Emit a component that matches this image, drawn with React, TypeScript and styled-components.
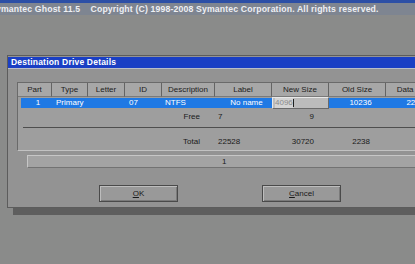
import styled, { createGlobalStyle } from 'styled-components';

const Global = createGlobalStyle`
  html, body {
    margin: 0;
    padding: 0;
    background: #8a8b8a;
    overflow: hidden;
  }
  #root {
    width: 415px;
    height: 264px;
  }
`;

const Screen = styled.div`
  width: 415px;
  height: 264px;
  overflow: hidden;
  background: #8a8b8a;
  font-family: 'Liberation Sans', Arial, sans-serif;
  display: flex;
  flex-direction: column;
`;

const TopBar = styled.div`
  height: 12px;
  border-top: 3px solid #2c4fa6;
  background: #7e8591;
  color: #eef0f4;
  font-size: 8.7px;
  font-weight: bold;
  line-height: 12px;
  white-space: nowrap;
  overflow: hidden;
  text-indent: -10px;
  letter-spacing: 0.15px;
`;

const Dialog = styled.div`
  margin: 40px 0 0 7px;
  width: 440px;
  height: 151px;
  flex: none;
  background: #939393;
  border: 1px solid #5c5c5c;
  box-shadow: 6px 7px 0 #5e5e5e;
  display: flex;
  flex-direction: column;
`;

const TitleBar = styled.div`
  height: 11px;
  margin-top: 1px;
  background: #1a3fc4;
  border-bottom: 1px solid #b9bdc8;
  color: #ffffff;
  font-size: 8.5px;
  font-weight: bold;
  line-height: 11px;
  padding-left: 3px;
  letter-spacing: 0.2px;
`;

const Body = styled.div`
  padding: 13px 0 0 9px;
  display: flex;
  flex-direction: column;
`;

const Panel = styled.div`
  height: 67px;
  background: #9e9e9e;
  border-left: 1px solid #6a6a6a;
  border-top: 1px solid #6a6a6a;
  border-bottom: 1px solid #c2c2c2;
  display: flex;
  flex-direction: column;
`;

const cols = '34px 36px 37px 37px 53px 57px 57px 57px 57px';

const HeaderRow = styled.div`
  display: grid;
  grid-template-columns: ${cols};
  height: 14px;
`;

const HeadCell = styled.div`
  background: #a7a7a7;
  border-right: 1px solid #646464;
  border-bottom: 1px solid #7a7a7a;
  color: #1c1c1c;
  font-size: 8px;
  line-height: 14px;
  text-align: center;
  white-space: nowrap;
  overflow: hidden;
`;

const DataRow = styled.div`
  display: grid;
  grid-template-columns: ${cols};
  height: 10px;
  margin: 1px 0 0 3px;
  background: #1f79e4;
`;

const Cell = styled.div<{ $align?: string; $pad?: number }>`
  color: #ffffff;
  font-size: 8px;
  line-height: 10px;
  white-space: nowrap;
  text-align: ${(p) => p.$align || 'center'};
  padding: 0 ${(p) => p.$pad ?? 0}px;
`;

const Input = styled.div`
  margin: -1px 3px -1px -3px;
  height: 10px;
  background: #bcbcbc;
  border: 1px solid #e8e8e8;
  border-right-color: #6a6a6a;
  border-bottom-color: #6a6a6a;
  color: #f4f4f4;
  font-size: 8px;
  line-height: 10px;
  padding-left: 2px;
  display: flex;
  align-items: center;
`;

const Selected = styled.span`
  background: #d4d4d4;
  color: #8a8a8a;
`;

const Caret = styled.span`
  display: inline-block;
  width: 1px;
  height: 8px;
  background: #202020;
`;

const SumRow = styled.div<{ $top: number }>`
  display: grid;
  grid-template-columns: ${cols};
  height: 10px;
  margin-top: ${(p) => p.$top}px;
`;

const SumCell = styled.div<{ $align?: string; $pad?: number }>`
  color: #1a1a1a;
  font-size: 8px;
  line-height: 10px;
  white-space: nowrap;
  text-align: ${(p) => p.$align || 'left'};
  padding: 0 ${(p) => p.$pad ?? 0}px;
`;

const Rule = styled.div`
  height: 1px;
  margin: 5px 0 0 5px;
  background: #4e4e4e;
`;

const Progress = styled.div`
  margin: 4px 0 0 10px;
  height: 11px;
  background: #a3a3a3;
  border-top: 1px solid #c6c6c6;
  border-left: 1px solid #c6c6c6;
  border-bottom: 1px solid #727272;
  color: #1a1a1a;
  font-size: 8px;
  line-height: 11px;
  padding-left: 194px;
`;

const Buttons = styled.div`
  display: flex;
  gap: 84px;
  margin: 17px 0 0 82px;
`;

const Button = styled.div`
  width: 77px;
  height: 15px;
  background: #999999;
  border: 1px solid #4a4a4a;
  box-shadow: inset 1px 1px 0 #bdbdbd, inset -1px -1px 0 #7a7a7a;
  color: #1a1a1a;
  font-size: 8px;
  line-height: 15px;
  text-align: center;
`;

const Key = styled.span`
  text-decoration: underline;
`;

export default function App() {
  const headers = ['Part', 'Type', 'Letter', 'ID', 'Description', 'Label', 'New Size', 'Old Size', 'Data Size'];
  return (
    <Screen>
      <Global />
      <TopBar>
        Symantec Ghost 11.5&nbsp;&nbsp;&nbsp; Copyright (C) 1998-2008 Symantec Corporation. All rights reserved.
      </TopBar>
      <Dialog>
        <TitleBar>Destination Drive Details</TitleBar>
        <Body>
          <Panel>
            <HeaderRow>
              {headers.map((h) => (
                <HeadCell key={h}>{h}</HeadCell>
              ))}
            </HeaderRow>
            <DataRow>
              <Cell>1</Cell>
              <Cell $align="left" $pad={1}>Primary</Cell>
              <Cell />
              <Cell $align="left" $pad={1}>07</Cell>
              <Cell $align="left" $pad={0}>NTFS</Cell>
              <Cell>No name</Cell>
              <Input>
                <Selected>4096</Selected>
                <Caret />
              </Input>
              <Cell>10236</Cell>
              <Cell>22528</Cell>
            </DataRow>
            <SumRow $top={4}>
              <SumCell />
              <SumCell />
              <SumCell />
              <SumCell />
              <SumCell $align="right" $pad={15}>Free</SumCell>
              <SumCell $pad={3}>7</SumCell>
              <SumCell $align="right" $pad={15}>9</SumCell>
              <SumCell />
              <SumCell />
            </SumRow>
            <Rule />
            <SumRow $top={9}>
              <SumCell />
              <SumCell />
              <SumCell />
              <SumCell />
              <SumCell $align="right" $pad={15}>Total</SumCell>
              <SumCell $pad={3}>22528</SumCell>
              <SumCell $align="right" $pad={15}>30720</SumCell>
              <SumCell $align="right" $pad={16}>2238</SumCell>
              <SumCell />
            </SumRow>
          </Panel>
          <Progress>1</Progress>
          <Buttons>
            <Button>
              <Key>O</Key>K
            </Button>
            <Button>
              <Key>C</Key>ancel
            </Button>
          </Buttons>
        </Body>
      </Dialog>
    </Screen>
  );
}
